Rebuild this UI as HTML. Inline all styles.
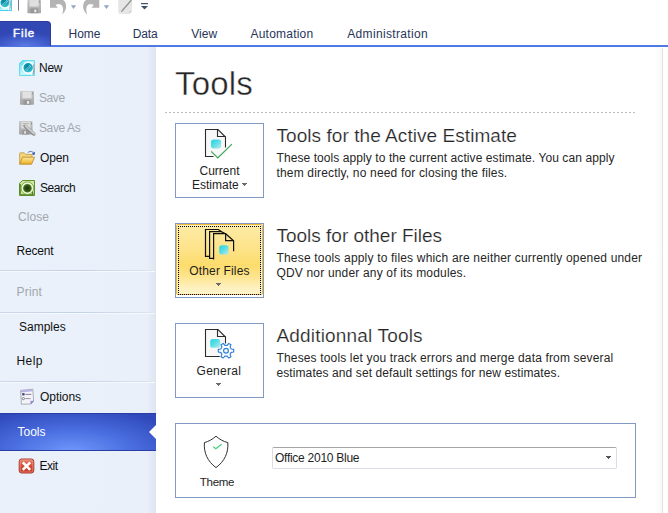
<!DOCTYPE html>
<html><head><meta charset="utf-8">
<style>
*{box-sizing:border-box;margin:0;padding:0}
html,body{width:668px;height:513px;overflow:hidden;background:#fff}
body{font-family:"Liberation Sans","DejaVu Sans",sans-serif;font-size:12px;color:#1e1e1e;position:relative}
.abs{position:absolute}
svg{position:absolute;overflow:visible}
#qat{left:0;top:0;width:668px;height:22px;background:#fff}
#tabs{left:0;top:21px;width:668px;height:24px;background:#fff}
#tabline{left:0;top:45px;width:668px;height:2px;background:linear-gradient(#5580ea,#4a72e2)}
#filetab{left:0;top:21px;width:51px;height:25px;border-radius:0 4px 0 0;background:radial-gradient(ellipse 40px 14px at 50% 100%,#5b7be6 0%,#3b55c4 70%,#3147b4 100%);border:1px solid #2b3ca0;border-left:none;border-bottom:none;color:#fff;font-weight:bold}
.tab{top:27px;font-size:12px;line-height:14px;color:#27345a;white-space:nowrap}
#side{left:0;top:47px;width:156px;height:466px;background:linear-gradient(90deg,#eaf1fb 0%,#e9f0fa 94%,#dde5f1 100%)}
#sideborder{left:156px;top:47px;width:1px;height:466px;background:#fff}
.mi{left:0;width:155px;height:30px;font-size:12px;color:#111}
.mi span{position:absolute;top:0;line-height:14px;letter-spacing:-0.25px;white-space:nowrap}
.dis span{color:#a3a7ad}
.sep{left:0;width:155px;height:2px;background:linear-gradient(90deg,#ccd8ea 0%,#c3d1e6 50%,rgba(195,209,230,0.4) 96%,transparent 100%) 0 0/100% 1px no-repeat,linear-gradient(90deg,#f6f9fd,#f6f9fd) 0 1px/100% 1px no-repeat}
#sel{left:0;top:413px;width:156px;height:38px;background:radial-gradient(ellipse 120px 44px at 46% 105%,#6f98fc 0%,#4a6ee0 50%,#3049ba 100%);border-top:1px solid #2a3da4;border-bottom:1px solid #2a3da4}
#selarrow{left:149px;top:425px;width:0;height:0;border-top:7px solid transparent;border-bottom:7px solid transparent;border-right:7px solid #fff}
#main{left:157px;top:47px;width:511px;height:466px;background:#fff}
h1{position:absolute;left:175px;top:64px;font-weight:normal;font-size:33px;line-height:40px;color:#262626;letter-spacing:0.2px;-webkit-text-stroke:0.4px #fff}
#dots{left:165px;top:112px;width:470px;height:1px;background:repeating-linear-gradient(90deg,#bdbdbd 0 2px,transparent 2px 4px)}
.btn{left:175px;width:89px;height:75px;border:1px solid #8299c4;background:#fff;text-align:center;font-size:12px;color:#1e1e1e}
.btn .lbl{position:absolute;left:0;width:100%;line-height:14px;white-space:nowrap}
.dd{display:inline-block;width:5px;height:3px;--c:#6a6a6a;background:linear-gradient(var(--c),var(--c)) 0 0/5px 1px no-repeat,linear-gradient(var(--c),var(--c)) 1px 1px/3px 1px no-repeat,linear-gradient(var(--c),var(--c)) 2px 2px/1px 1px no-repeat;vertical-align:middle}
.hd{left:276.5px;font-size:19px;line-height:24px;color:#262626;white-space:nowrap;-webkit-text-stroke:0.2px #fff}
.tx{left:276.5px;font-size:12px;line-height:15px;color:#262626;white-space:nowrap}
#theme{left:175px;top:423px;width:461px;height:75px;border:1px solid #8299c4;background:#fff}
#combo{left:272px;top:447px;width:345px;height:22px;border:1px solid #dadde7;border-top-color:#a6a6a6;border-radius:2px;background:#fff}
#rline{left:658px;top:48px;width:5px;height:465px;background:linear-gradient(90deg,#fdfdfd,#f8f8f8 79%,#e2e2e2 80%)}
</style></head><body>
<div id="qat" class="abs"></div>
<div id="tabs" class="abs"></div>
<div id="main" class="abs"></div>
<div id="rline" class="abs"></div>
<div id="tabline" class="abs"></div>
<div id="filetab" class="abs"><span class="abs" style="left:13px;top:3.5px;line-height:14px;font-size:11.5px;letter-spacing:0.9px;font-weight:normal;-webkit-text-stroke:0.35px #fff;text-shadow:0 0 2px rgba(190,205,255,0.55)">File</span></div>
<span class="abs tab" style="left:68.5px;letter-spacing:0.00px">Home</span>
<span class="abs tab" style="left:132.8px;letter-spacing:-0.17px">Data</span>
<span class="abs tab" style="left:191.2px;letter-spacing:0.08px">View</span>
<span class="abs tab" style="left:250.5px;letter-spacing:0.22px">Automation</span>
<span class="abs tab" style="left:347.2px;letter-spacing:0.35px">Administration</span>

<!--QAT-->


<div id="side" class="abs"></div>
<div id="sideborder" class="abs"></div>
<div class="abs mi" style="top:61px"><span style="left:39.0px;letter-spacing:-0.25px">New</span></div>
<div class="abs mi dis" style="top:91px"><span style="left:39.0px;letter-spacing:-0.42px">Save</span></div>
<div class="abs mi dis" style="top:121px"><span style="left:39.0px;letter-spacing:-0.38px">Save As</span></div>
<div class="abs mi" style="top:151px"><span style="left:40.0px;letter-spacing:-0.17px">Open</span></div>
<div class="abs mi" style="top:181px"><span style="left:40.0px;letter-spacing:-0.45px">Search</span></div>
<div class="abs mi dis" style="top:210px"><span style="left:18.0px;letter-spacing:0.06px">Close</span></div>
<div class="abs mi" style="top:244px"><span style="left:16.5px;letter-spacing:-0.20px">Recent</span></div>
<div class="abs sep" style="top:270px"></div>
<div class="abs mi dis" style="top:285px"><span style="left:16.5px;letter-spacing:0.19px">Print</span></div>
<div class="abs sep" style="top:312px"></div>
<div class="abs mi" style="top:320px"><span style="left:19.0px;letter-spacing:0.00px">Samples</span></div>
<div class="abs mi" style="top:354px"><span style="left:16.5px;letter-spacing:0.42px">Help</span></div>
<div class="abs sep" style="top:381px"></div>
<div class="abs mi" style="top:390px"><span style="left:40.0px;letter-spacing:-0.04px">Options</span></div>
<div id="sel" class="abs"></div>
<div id="selarrow" class="abs"></div>
<div class="abs mi" style="top:425px"><span style="left:17.5px;letter-spacing:0.00px;color:#fff">Tools</span></div>
<div class="abs mi" style="top:459px"><span style="left:39.5px;letter-spacing:-0.50px">Exit</span></div>

<h1>Tools</h1>
<div id="dots" class="abs"></div>

<div class="abs btn" style="top:123px"><span class="lbl" style="top:40px">Current<br>Estimate <i class="dd" style="position:relative;top:-1px"></i></span></div>
<div id="h1a" class="abs hd" style="top:124px;letter-spacing:0.062px">Tools for the Active Estimate</div>
<div id="l1a" class="abs tx" style="top:151px;letter-spacing:0.081px">These tools apply to the current active estimate. You can apply</div>
<div id="l1b" class="abs tx" style="top:166px;letter-spacing:0.170px">them directly, no need for closing the files.</div>

<div class="abs btn" style="top:223px"><div class="abs" style="left:0;top:0;width:87px;height:71px;border:1px solid #eeb933;border-radius:2px;background:linear-gradient(#fdeba6 0%,#fde286 38%,#fcdc6c 58%,#fde48c 74%,#fef0bc 90%,#fef4cc 100%);box-shadow:inset 0 0 0 1px #fff3c6"></div><div class="abs" style="left:2px;top:2px;width:83px;height:69px;background:repeating-linear-gradient(90deg,#000 0 1px,transparent 1px 2px) 0 0/100% 1px no-repeat,repeating-linear-gradient(90deg,#000 0 1px,transparent 1px 2px) 0 100%/100% 1px no-repeat,repeating-linear-gradient(0deg,#000 0 1px,transparent 1px 2px) 0 0/1px 100% no-repeat,repeating-linear-gradient(0deg,#000 0 1px,transparent 1px 2px) 100% 0/1px 100% no-repeat"></div><span class="lbl" style="top:40px;letter-spacing:0.15px">Other Files</span><i class="dd abs" style="left:40px;top:59px"></i></div>
<div id="h2a" class="abs hd" style="top:224px;letter-spacing:-0.013px">Tools for other Files</div>
<div id="l2a" class="abs tx" style="top:251px;letter-spacing:0.182px">These tools apply to files which are neither currently opened under</div>
<div id="l2b" class="abs tx" style="top:266px;letter-spacing:0.172px">QDV nor under any of its modules.</div>

<div class="abs btn" style="top:323px"><span class="lbl" style="top:40px;left:-0.7px;letter-spacing:0.26px">General</span><i class="dd abs" style="left:40px;top:59px"></i></div>
<div id="h3a" class="abs hd" style="top:324px;letter-spacing:0.175px">Additionnal Tools</div>
<div id="l3a" class="abs tx" style="top:351px;letter-spacing:0.153px">Theses tools let you track errors and merge data from several</div>
<div id="l3b" class="abs tx" style="top:366px;letter-spacing:0.090px">estimates and set default settings for new estimates.</div>

<div id="theme" class="abs"><span class="abs" style="left:0;width:82px;text-align:center;top:51px;line-height:14px;font-size:11.5px;letter-spacing:-0.3px">Theme</span></div>
<div id="combo" class="abs"><span class="abs" style="left:2px;top:3px;line-height:14px;letter-spacing:-0.27px;white-space:nowrap">Office 2010 Blue</span><i class="dd abs" style="left:333px;top:8px;--c:#555"></i></div>

<svg width="668" height="513" viewBox="0 0 668 513" style="left:0;top:0">
<defs>
<linearGradient id="cy" x1="0" y1="0" x2="1" y2="1"><stop offset="0" stop-color="#22d6e2"/><stop offset="0.45" stop-color="#55dde6"/><stop offset="1" stop-color="#bdeaec"/></linearGradient>
<filter id="bl" x="-20%" y="-20%" width="140%" height="140%"><feGaussianBlur stdDeviation="0.6"/></filter>
<linearGradient id="gry" x1="0" y1="0" x2="0" y2="1"><stop offset="0" stop-color="#c9c9c9"/><stop offset="1" stop-color="#a4a4a4"/></linearGradient>
<linearGradient id="fold" x1="0" y1="0" x2="0" y2="1"><stop offset="0" stop-color="#fbe9a6"/><stop offset="0.45" stop-color="#f7cf62"/><stop offset="1" stop-color="#e9ad2b"/></linearGradient>
<linearGradient id="red" x1="0" y1="0" x2="0" y2="1"><stop offset="0" stop-color="#e98a78"/><stop offset="0.5" stop-color="#d84a34"/><stop offset="1" stop-color="#c23a28"/></linearGradient>
<linearGradient id="newbg" x1="0" y1="0" x2="1" y2="1"><stop offset="0" stop-color="#22d0ee"/><stop offset="0.3" stop-color="#6be2f2"/><stop offset="0.55" stop-color="#c9f6fa"/><stop offset="1" stop-color="#c4f3f8"/></linearGradient>
<radialGradient id="teal" cx="0.4" cy="0.35" r="0.7"><stop offset="0" stop-color="#0b7f97"/><stop offset="0.6" stop-color="#1aa3ba"/><stop offset="1" stop-color="#45dbea"/></radialGradient>
<radialGradient id="grn" cx="0.5" cy="0.5" r="0.6"><stop offset="0" stop-color="#1c3309"/><stop offset="0.6" stop-color="#35581a"/><stop offset="1" stop-color="#7fb03e"/></radialGradient>
</defs>
<!-- big icon 1 -->
<g fill="none" stroke="#2b2b2b" stroke-width="1.1">
<path d="M205.5,129.5 H218 L225.5,137 V156.5 H205.5Z" fill="#f8f8f8" stroke="none"/>
<path d="M213.5,156.5 H205.5 V129.5 H218 L225.5,137 V147.4"/>
<path d="M217.5,129.5 V136.5 H225.5"/>
</g>
<rect x="211" y="139.4" width="10.2" height="9" rx="2.6" fill="url(#cy)" filter="url(#bl)"/>
<path d="M211.2,151.3 L217.8,157.9 L231.9,144.1" fill="none" stroke="#3aa558" stroke-width="1.2"/>
<!-- big icon 2 -->
<g fill="none" stroke="#111" stroke-width="1.2" stroke-linejoin="miter">
<path d="M209.6,256.4 H205.5 V229.5 H218.2 L221.3,231.6"/>
<path d="M213.5,258.4 H209.6 V231.6 H221.3 L225.6,233.7"/>
<path d="M213.6,259.6 V233.7 H225.6 L233.6,240.8 V251.3"/>
<path d="M225.6,233.7 V240.7 H233.6"/>
</g>
<rect x="219.2" y="245.2" width="9.4" height="9.4" rx="2.6" fill="url(#cy)" filter="url(#bl)"/>
<!-- big icon 3 -->
<g fill="none" stroke="#2b2b2b" stroke-width="1.1">
<path d="M205.5,329.5 H218 L225.5,337 V356.5 H205.5Z" fill="#f8f8f8" stroke="none"/>
<path d="M219.8,356.5 H205.5 V329.5 H218 L225.5,337 V343.5"/>
<path d="M217.5,329.5 V336.5 H225.5"/>
</g>
<rect x="210.2" y="339" width="10" height="8.8" rx="2.6" fill="url(#cy)" filter="url(#bl)"/>
<path d="M231.23,349.00 L233.69,349.40 L233.69,352.00 L231.23,352.40 L230.09,354.38 L230.97,356.71 L228.72,358.01 L227.14,356.08 L224.86,356.08 L223.28,358.01 L221.03,356.71 L221.91,354.38 L220.77,352.40 L218.31,352.00 L218.31,349.40 L220.77,349.00 L221.91,347.02 L221.03,344.69 L223.28,343.39 L224.86,345.32 L227.14,345.32 L228.72,343.39 L230.97,344.69 L230.09,347.02Z" fill="#fff" stroke="#2f7fd6" stroke-width="1.15" stroke-linejoin="round"/>
<circle cx="226" cy="350.7" r="2.4" fill="#f4fbff" stroke="#2f7fd6" stroke-width="1.15"/>
<!-- shield -->
<path d="M216,436.2 C213,439 208.5,441.6 204.4,442.6 C203.6,452.5 207.5,461.5 216,467.6 C224.5,461.5 228.6,452.5 227.8,442.6 C223.5,441.6 219,439 216,436.2Z" fill="#fff" stroke="#2e2e2e" stroke-width="1"/>
<path d="M213.2,446.6 L215.8,448.8 L221.6,444.2" fill="none" stroke="#3ecf7c" stroke-width="1.2"/>

<!-- New -->
<g>
<path d="M22.5,60.5 H34.5 V75.5 H19.5 V63.5Z" fill="url(#newbg)" stroke="#5ad8ea" stroke-width="0.9"/>
<path d="M21,74 V64.2 L23.2,62 H33" fill="none" stroke="#e9fdff" stroke-width="0.8" opacity="0.8"/>
<circle cx="28.2" cy="67.8" r="4.8" fill="url(#teal)"/>
<circle cx="28.2" cy="67.8" r="5.6" fill="none" stroke="#fff" stroke-width="1.3"/>
<path d="M33.4,64.6 C34.6,68 33.8,71 32.8,74.8" fill="none" stroke="#7d8388" stroke-width="0.9"/>
<path d="M31.6,71.2 L31.8,75.2" fill="none" stroke="#fff" stroke-width="1.2"/>
<path d="M25.3,69.8 C27,68.5 28.5,67 30.4,64.8 M26.6,71 C28,69.6 29.6,67.6 30.9,66" fill="none" stroke="#bdf3f8" stroke-width="0.7" opacity="0.85"/>
</g>
<!-- Save (disabled) -->
<g>
<rect x="20" y="91" width="14" height="13.8" rx="0.8" fill="url(#gry)"/>
<rect x="22.4" y="91.6" width="9.2" height="6.6" fill="#e2e2e2" stroke="#d0d0d0" stroke-width="0.5"/>
<rect x="32.2" y="92.2" width="0.9" height="2.2" fill="#8e8e8e"/>
<rect x="23.4" y="100" width="7.4" height="4.8" fill="#989898"/>
<rect x="27" y="101" width="2.2" height="2.8" fill="#e8e8e8"/>
</g>
<!-- Save As (disabled) -->
<g>
<rect x="19" y="121" width="13.6" height="13.6" rx="0.8" fill="url(#gry)"/>
<rect x="21.2" y="121.8" width="9" height="6.4" fill="#dedede" stroke="#cfcfcf" stroke-width="0.5"/>
<path d="M22.6,123.6 H28.8 M22.6,125.6 H26.4" stroke="#a8a8a8" stroke-width="0.8"/>
<rect x="31" y="122.4" width="0.9" height="2.2" fill="#8e8e8e"/>
<rect x="22.2" y="130.2" width="7" height="4.4" fill="#989898"/>
<rect x="24" y="131.2" width="2" height="2.4" fill="#dcdcdc"/>
<path d="M25.2,126.2 L33.8,134 " stroke="#8c8c8c" stroke-width="3.4" stroke-linecap="round"/>
<path d="M25.6,126 L34,133.6 " stroke="#cfcfcf" stroke-width="1.9" stroke-linecap="round"/>
</g>
<!-- Open -->
<g>
<path d="M19.6,163.8 V153.6 Q19.6,152.8 20.4,152.8 H24.2 L25.6,154.4 H31.2 Q32,154.4 32,155.2 V157" fill="#f3d47c" stroke="#c89a3a" stroke-width="0.8"/>
<path d="M19.6,164.2 L22.6,157.2 H34.6 L31.6,164.2Z" fill="url(#fold)" stroke="#b88622" stroke-width="0.8" stroke-linejoin="round"/>
<path d="M27.6,152.9 C29.4,150.9 32.4,150.9 33.6,153.2" fill="none" stroke="#4668ae" stroke-width="0.9"/>
<path d="M34.9,151.6 L34.6,155 L31.6,154.2Z" fill="#2f529c"/>
</g>
<!-- Search -->
<g>
<path d="M22.4,180.5 H34.5 V195.5 H19.5 V183.4Z" fill="#cfe6a6" stroke="#5e9026" stroke-width="1"/><path d="M20.4,184 V194.6 H33" fill="none" stroke="#4f7f1e" stroke-width="0.9"/>
<circle cx="27.4" cy="188.2" r="4.3" fill="url(#grn)"/>
<circle cx="27.4" cy="188.2" r="5.4" fill="none" stroke="#f2fae2" stroke-width="1.2"/>
<circle cx="27.4" cy="188.2" r="6.3" fill="none" stroke="#6f9f30" stroke-width="0.8"/>
<path d="M32.4,191.6 L33,195" stroke="#4f7d1c" stroke-width="1.4"/>
</g>
<!-- Options -->
<g>
<path d="M20.6,390.4 L32.8,389.2 L33.6,401 L31,404 L21.4,404.2Z" fill="#f3f3f8" stroke="#9a9aa8" stroke-width="0.8" stroke-linejoin="round"/>
<path d="M20.6,390.4 L32.8,389.2 L32.9,391.2 L20.7,392.4Z" fill="#b9b4e4"/>
<path d="M33.6,401 L31,404 L30.6,401.2Z" fill="#8f88d8" stroke="#7d78b8" stroke-width="0.4"/>
<rect x="22.2" y="393.2" width="2.4" height="2.2" fill="#3a3a7a"/>
<path d="M25.4,394.4 H31.4" stroke="#77778c" stroke-width="0.9"/>
<circle cx="23.4" cy="398.6" r="1.1" fill="#fff" stroke="#55556a" stroke-width="0.7"/>
<path d="M25.4,398.6 H30.6" stroke="#8a8a9a" stroke-width="0.9"/>
</g>
<!-- Exit -->
<g>
<rect x="19.2" y="459" width="14.6" height="14" rx="2.4" fill="url(#red)" stroke="#a83a2a" stroke-width="1"/>
<rect x="20.2" y="460" width="12.6" height="12" rx="1.6" fill="none" stroke="#f0a898" stroke-width="0.7" opacity="0.8"/>
<path d="M22.8,462.4 L30.2,469.8 M30.2,462.4 L22.8,469.8" stroke="#fff" stroke-width="2.6" stroke-linecap="butt"/>
</g>
<!-- QAT -->
<g>
<path d="M0,0 H11.5 V10.6 H0Z" fill="url(#newbg)"/>
<path d="M0,10.5 H11.5 V0" fill="none" stroke="#46d2e6" stroke-width="1"/>
<circle cx="5" cy="2.8" r="4.6" fill="url(#teal)"/>
<circle cx="5" cy="2.8" r="5.3" fill="none" stroke="#fff" stroke-width="1.3"/>
<path d="M9.8,0.2 C10.9,3.2 10.2,6 9.4,9.6" fill="none" stroke="#8a8f94" stroke-width="0.9"/>
<path d="M8.6,6.2 L8.8,10.2" fill="none" stroke="#fff" stroke-width="1.2"/>
<path d="M2.2,4.8 C4,3.5 5.4,2 7.3,0 M3.5,6 C5,4.6 6.5,2.6 7.8,1" fill="none" stroke="#bdf3f8" stroke-width="0.7" opacity="0.85"/>
<rect x="18" y="0" width="1" height="10.6" fill="#737983"/>
<!-- save -->
<rect x="27.4" y="0" width="13.6" height="13.2" rx="0.8" fill="url(#gry)"/>
<rect x="29.6" y="0" width="9" height="6.4" fill="#e0e0e0" stroke="#cfcfcf" stroke-width="0.5"/>
<rect x="39.3" y="0.4" width="0.9" height="2.4" fill="#8e8e8e"/>
<rect x="30.6" y="8.4" width="7.4" height="4.8" fill="#989898"/>
<rect x="34.2" y="9.6" width="2.2" height="2.6" fill="#e8e8e8"/>
<!-- undo -->
<path d="M50,0 V7.7 H57.7 L55.6,5 C58,3.2 61,3.6 62.3,6 C63.5,8.4 63.2,11 62.2,14.4 C65.6,11.4 67,7 65.6,3.2 C65,1.6 64,0.6 63.2,0 Z" fill="#b4b4b4"/>
<path d="M70.9,5.2 H76.1 L73.5,8.9Z" fill="#93a6c4"/>
<!-- redo -->
<path d="M99.3,0 V7.7 H91.6 L93.7,5 C91.3,3.2 88.3,3.6 87,6 C85.8,8.4 86.1,11 87.1,14.4 C83.7,11.4 82.3,7 83.7,3.2 C84.3,1.6 85.3,0.6 86.1,0Z" fill="#b4b4b4"/>
<path d="M103.8,5.2 H109.2 L106.5,8.9Z" fill="#93a6c4"/>
<!-- pen/page -->
<path d="M118.2,0 H132 V11 L129.4,14 H120.2 Q118.2,14 118.2,12Z" fill="#e6e6e6"/>
<path d="M131.4,0 L121.4,11.6" stroke="#8e8e8e" stroke-width="1.3"/>
<path d="M132,11 L129.4,14 V11Z" fill="#cfcfcf"/>
<!-- customize -->
<rect x="141" y="3" width="7" height="1.2" fill="#3d4f6d"/>
<path d="M141,6 H148 L144.5,9.6Z" fill="#3d4f6d"/>
</g>
<!--SMALLICONS_END-->
</svg>
</body></html>
